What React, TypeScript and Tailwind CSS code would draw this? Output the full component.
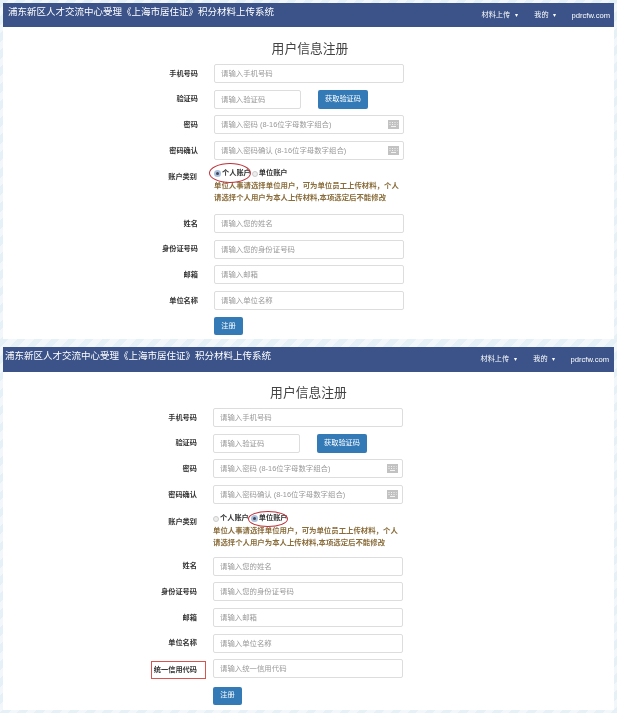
const font = 'font-["Liberation_Sans","Noto_Sans_CJK_SC",sans-serif]';

// 输入框右侧的键盘图标
function KeyboardIcon() {
  return (
    <svg width="11" height="9" viewBox="0 0 11 9">
      <rect width="11" height="9" fill="#c2c2c2" />
      <path d="M1.5 2.5h1M4 2.5h1M6.5 2.5h1M9 2.5h.5M1.5 4.5h1M4 4.5h1M6.5 4.5h1M9 4.5h.5M3 6.5h5" stroke="#f2f2f2" strokeWidth="1" />
    </svg>
  );
}

function Radio({ checked }: { checked?: boolean }) {
  return checked ? (
    <span className="flex h-[7px] w-[7px] shrink-0 items-center justify-center rounded-full bg-[#a9c1de]">
      <span className="h-[3px] w-[3px] rounded-full bg-[#445]" />
    </span>
  ) : (
    <span className="h-[6px] w-[6px] shrink-0 rounded-full border border-[#ccc] bg-[#eee]" />
  );
}

function Field({ label, placeholder, keyboard, boxed, company }: { label: string; placeholder: string; keyboard?: boolean; boxed?: boolean; company?: boolean }) {
  return (
    <div className="flex h-[19px] items-center">
      <div className={company ? 'flex w-[194px] justify-end' : 'flex w-[195px] justify-end'}>
        <span
          className={
            boxed
              ? 'mr-[-9px] mt-[3px] flex h-[18px] items-center border-[1.5px] border-[#d9534f] pl-[2px] pr-[8px] text-[7.2px] font-bold text-[#333]'
              : 'mt-[1px] text-[7.2px] font-bold text-[#333]'
          }
        >
          {label}
        </span>
      </div>
      <div className="ml-[16px] flex h-[19px] w-[190px] items-center justify-between rounded-[2px] border border-[#ddd] bg-white pl-[6px] pr-[4px] text-[7.4px] text-[#999]">
        <span>{placeholder}</span>
        {keyboard && <KeyboardIcon />}
      </div>
    </div>
  );
}

function Panel({ company }: { company?: boolean }) {
  return (
    <div className={company ? 'mt-[8px] h-[363px] bg-white' : 'h-[336px] bg-white'}>
      <div className={company ? 'flex h-[25px] items-start justify-between bg-[#3b5389] pl-[2px] pr-[5px] text-white' : 'flex h-[24px] items-start justify-between bg-[#3b5389] pl-[5px] pr-[4px] text-white'}>
        <span className="mt-[2px] text-[9.5px]">浦东新区人才交流中心受理《上海市居住证》积分材料上传系统</span>
        <div className="mt-[7px] flex items-center text-[7.2px]">
          <span>材料上传</span>
          <span className="ml-[5px] text-[6px]">▾</span>
          <span className="ml-[16px]">我的</span>
          <span className="ml-[4px] text-[6px]">▾</span>
          <span className="ml-[16px] text-[7.6px]">pdrcfw.com</span>
        </div>
      </div>
      <h1 className={company ? 'mt-[12px] text-center text-[12.8px] leading-[18px] text-[#444]' : 'mt-[13px] ml-[3px] text-center text-[12.8px] leading-[18px] text-[#444]'}>用户信息注册</h1>
      <div className="mt-[6px] flex flex-col gap-[6.7px]">
        <Field company={company} label="手机号码" placeholder="请输入手机号码" />
        <div className="flex h-[19px] items-center">
          <span className={company ? 'mt-[1px] w-[194px] text-right text-[7.2px] font-bold text-[#333]' : 'mt-[1px] w-[195px] text-right text-[7.2px] font-bold text-[#333]'}>验证码</span>
          <div className="ml-[16px] flex h-[19px] w-[87px] items-center rounded-[2px] border border-[#ddd] pl-[6px] text-[7.4px] text-[#999]">请输入验证码</div>
          <button className="ml-[17px] h-[19px] w-[50px] rounded-[2px] bg-[#337ab7] text-[7.2px] text-white">获取验证码</button>
        </div>
        <Field company={company} label="密码" placeholder="请输入密码 (8-16位字母数字组合)" keyboard />
        <Field company={company} label="密码确认" placeholder="请输入密码确认 (8-16位字母数字组合)" keyboard />
      </div>
      <div className={company ? 'mt-[8px] flex' : 'mt-[7px] flex'}>
        <span className="mt-[5px] w-[194px] text-right text-[7.2px] font-bold text-[#333]">账户类别</span>
        <div className={company ? 'ml-[16px] w-[190px] font-bold' : 'ml-[17px] w-[190px] font-bold'}>
          <div className="relative flex h-[13px] items-center text-[7.2px] text-[#333]">
            <Radio checked={!company} />
            <span className="ml-[1px]">个人账户</span>
            <span className={company ? 'ml-[2px] flex' : 'ml-[1px] flex'}>
              <Radio checked={company} />
            </span>
            <span className="ml-[1px]">单位账户</span>
            <span className={company ? 'absolute left-[35px] top-[-1px] h-[16px] w-[40px] rounded-[50%] border border-[#c0303a]' : 'absolute left-[-5px] top-[-4px] h-[20px] w-[42px] rounded-[50%] border border-[#c0303a]'} />
          </div>
          <p className="text-[7.4px] leading-[12px] text-[#8a6d3b]">单位人事请选择单位用户，可为单位员工上传材料，个人请选择个人用户为本人上传材料,本项选定后不能修改</p>
        </div>
      </div>
      <div className={company ? 'mt-[7.5px] flex flex-col gap-[6.7px]' : 'mt-[10px] flex flex-col gap-[6.7px]'}>
        <Field company={company} label="姓名" placeholder="请输入您的姓名" />
        <Field company={company} label="身份证号码" placeholder="请输入您的身份证号码" />
        <Field company={company} label="邮箱" placeholder="请输入邮箱" />
        <Field company={company} label="单位名称" placeholder="请输入单位名称" />
        {company && <Field company label="统一信用代码" placeholder="请输入统一信用代码" boxed />}
      </div>
      <button className={company ? 'ml-[210px] mt-[8.5px] block h-[18px] w-[29px] rounded-[2px] bg-[#337ab7] text-[7.2px] text-white' : 'ml-[211px] mt-[7px] block h-[18px] w-[29px] rounded-[2px] bg-[#337ab7] text-[7.2px] text-white'}>注册</button>
    </div>
  );
}

export default function App() {
  return (
    <div className={`${font} h-[713px] w-[617px] overflow-hidden bg-[repeating-linear-gradient(135deg,#e6f1f7_0px,#e6f1f7_6px,#f1f7fa_6px,#f1f7fa_12px)] px-[3px] pt-[3px] blur-[0.35px]`}>
      <Panel />
      <Panel company />
    </div>
  );
}
